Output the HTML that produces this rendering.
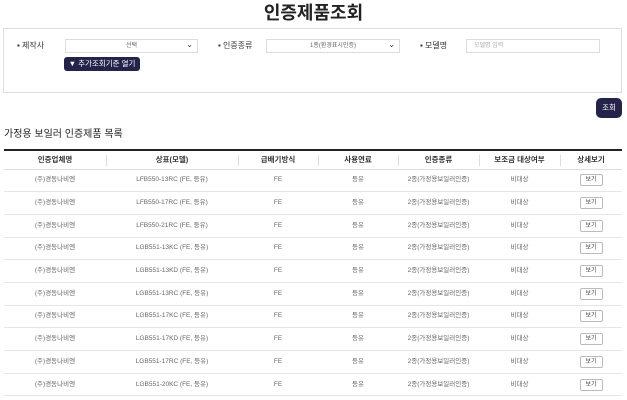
<!DOCTYPE html>
<html><head><meta charset="utf-8"><style>
*{margin:0;padding:0;box-sizing:border-box}
body{width:627px;height:400px;overflow:hidden;background:#fff;font-family:"Liberation Sans","Noto Sans CJK KR",sans-serif;color:#333;position:relative}
.a{position:absolute}
h1{position:absolute;left:0;width:627px;top:1px;text-align:center;font-size:18px;font-weight:bold;color:#222;line-height:24px}
.box{left:3px;top:28px;width:619px;height:65px;border:1px solid #ddd}
.lab{font-size:8px;color:#333;top:40px}
.sel{height:14px;border:1px solid #ddd;font-size:6px;color:#666;text-align:center;line-height:12px;background:#fff}
.sel i{position:absolute;right:4px;top:-1px;font-style:normal;font-size:8px;color:#333}
.btn{background:#24244a;color:#fff;border-radius:3px;font-size:7.5px;text-align:center}
table{position:absolute;left:4px;top:149px;width:618px;border-collapse:collapse;border-top:2px solid #222;font-size:6.5px;color:#666}
th{height:19px;font-weight:bold;color:#333;font-size:7.5px;border-bottom:1px solid #ddd;position:relative}
td{height:22.7px;text-align:center;vertical-align:middle;line-height:10px;border-bottom:1px solid #e6e6e6}
th+th:before{content:"";position:absolute;left:0;top:4px;height:11px;border-left:1px solid #ddd}
.v{display:inline-block;border:1px solid #bbb;border-radius:2px;width:23px;height:12px;line-height:10px;font-size:6px;color:#444;vertical-align:middle}
</style></head><body>
<h1>인증제품조회</h1>
<div class="a box"></div>
<div class="a lab" style="left:17px">▪ 제작사</div>
<div class="a sel" style="left:65px;top:39px;width:133px">선택<i>⌄</i></div>
<div class="a lab" style="left:218px">▪ 인증종류</div>
<div class="a sel" style="left:266px;top:39px;width:134px">1종(환경표시인증)<i>⌄</i></div>
<div class="a lab" style="left:420px">▪ 모델명</div>
<div class="a sel" style="left:466px;top:39px;width:134px;text-align:left;padding-left:7px;color:#aaa">모델명 입력</div>
<div class="a btn" style="left:64px;top:57px;width:76px;height:14px;line-height:14px">▼ 추가조회기준 열기</div>
<div class="a btn" style="left:596px;top:98px;width:26px;height:20px;line-height:20px;border-radius:5px">조회</div>
<div class="a" style="left:4px;top:128px;font-size:10px;color:#222;line-height:14px">가정용 보일러 인증제품 목록</div>
<table>
<colgroup><col style="width:102px"><col style="width:132px"><col style="width:80px"><col style="width:80px"><col style="width:81px"><col style="width:81px"><col></colgroup>
<tr><th>인증업체명</th><th>상표(모델)</th><th>급배기방식</th><th>사용연료</th><th>인증종류</th><th>보조금 대상여부</th><th>상세보기</th></tr>
<tr><td>(주)경동나비엔</td><td>LFB550-13RC (FE, 등유)</td><td>FE</td><td>등유</td><td>2종(가정용보일러인증)</td><td>비대상</td><td><span class="v">보기</span></td></tr>
<tr><td>(주)경동나비엔</td><td>LFB550-17RC (FE, 등유)</td><td>FE</td><td>등유</td><td>2종(가정용보일러인증)</td><td>비대상</td><td><span class="v">보기</span></td></tr>
<tr><td>(주)경동나비엔</td><td>LFB550-21RC (FE, 등유)</td><td>FE</td><td>등유</td><td>2종(가정용보일러인증)</td><td>비대상</td><td><span class="v">보기</span></td></tr>
<tr><td>(주)경동나비엔</td><td>LGB551-13KC (FE, 등유)</td><td>FE</td><td>등유</td><td>2종(가정용보일러인증)</td><td>비대상</td><td><span class="v">보기</span></td></tr>
<tr><td>(주)경동나비엔</td><td>LGB551-13KD (FE, 등유)</td><td>FE</td><td>등유</td><td>2종(가정용보일러인증)</td><td>비대상</td><td><span class="v">보기</span></td></tr>
<tr><td>(주)경동나비엔</td><td>LGB551-13RC (FE, 등유)</td><td>FE</td><td>등유</td><td>2종(가정용보일러인증)</td><td>비대상</td><td><span class="v">보기</span></td></tr>
<tr><td>(주)경동나비엔</td><td>LGB551-17KC (FE, 등유)</td><td>FE</td><td>등유</td><td>2종(가정용보일러인증)</td><td>비대상</td><td><span class="v">보기</span></td></tr>
<tr><td>(주)경동나비엔</td><td>LGB551-17KD (FE, 등유)</td><td>FE</td><td>등유</td><td>2종(가정용보일러인증)</td><td>비대상</td><td><span class="v">보기</span></td></tr>
<tr><td>(주)경동나비엔</td><td>LGB551-17RC (FE, 등유)</td><td>FE</td><td>등유</td><td>2종(가정용보일러인증)</td><td>비대상</td><td><span class="v">보기</span></td></tr>
<tr><td>(주)경동나비엔</td><td>LGB551-20KC (FE, 등유)</td><td>FE</td><td>등유</td><td>2종(가정용보일러인증)</td><td>비대상</td><td><span class="v">보기</span></td></tr>
</table>
</body></html>
